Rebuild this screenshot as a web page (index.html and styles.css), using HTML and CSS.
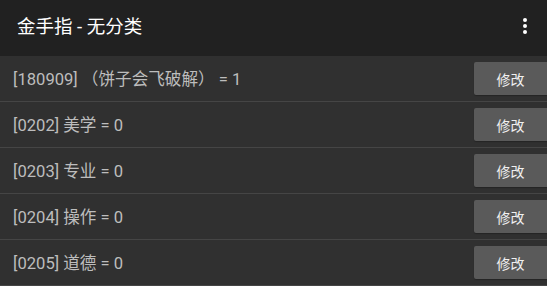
FILE: index.html
```html
<!DOCTYPE html>
<html lang="zh">
<head>
<meta charset="utf-8">
<link rel="stylesheet" href="styles.css">
</head>
<body>
<header class="bar">
  <span class="title">金手指 - 无分类</span>
  <span class="menu"><i></i><i></i><i></i></span>
</header>
<ul class="list">
  <li class="row"><span class="label">[180909] （饼子会飞破解） = 1</span><button class="btn">修改</button></li>
  <li class="row"><span class="label">[0202] 美学 = 0</span><button class="btn">修改</button></li>
  <li class="row"><span class="label">[0203] 专业 = 0</span><button class="btn">修改</button></li>
  <li class="row"><span class="label">[0204] 操作 = 0</span><button class="btn">修改</button></li>
  <li class="row"><span class="label">[0205] 道德 = 0</span><button class="btn">修改</button></li>
</ul>
</body>
</html>
```
FILE: styles.css
```css
html, body {
  margin: 0;
  padding: 0;
  background: #303030;
  font-family: Roboto, "Noto Sans CJK SC", sans-serif;
  overflow: hidden;
}
.bar {
  height: 56px;
  background: #212121;
  display: flex;
  align-items: center;
  justify-content: space-between;
  padding: 0 0 0 17px;
}
.title {
  color: #ffffff;
  font-size: 18.5px;
  line-height: 1;
  margin-top: -2px;
}
.menu {
  width: 48px;
  display: flex;
  flex-direction: column;
  align-items: center;
  gap: 2px;
  padding-left: 4px;
  box-sizing: border-box;
  margin-top: -4px;
}
.menu i {
  display: block;
  width: 4px;
  height: 4px;
  border-radius: 50%;
  background: #fff;
}
.list {
  list-style: none;
  margin: 0;
  padding: 0;
}
.row {
  height: 45px;
  border-bottom: 1px solid #454545;
  display: flex;
  align-items: center;
  justify-content: space-between;
  padding-left: 13px;
}
.label {
  color: #bdbdbd;
  font-size: 16.6px;
  margin-top: -1px;
}
.btn {
  width: 73px;
  height: 33px;
  border: none;
  border-radius: 2px 0 0 2px;
  background: #5a5a5a;
  color: #f0f0f0;
  font-family: Roboto, "Noto Sans CJK SC", sans-serif;
  font-size: 14px;
  padding: 0;
  box-shadow: 0 1px 1px rgba(0,0,0,0.25);
}
```
